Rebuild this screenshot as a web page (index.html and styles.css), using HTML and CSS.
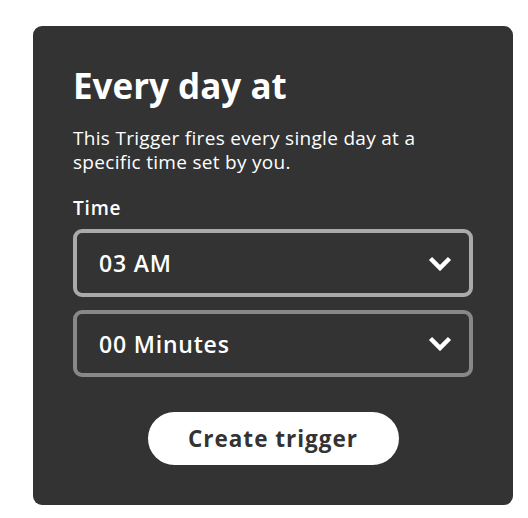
FILE: index.html
```html
<!DOCTYPE html>
<html>
<head>
<meta charset="utf-8">
<link rel="stylesheet" href="styles.css">
</head>
<body>
<div class="card">
  <h1 class="title">Every day at</h1>
  <p class="desc">This Trigger fires every single day at a specific time set by you.</p>
  <div class="label">Time</div>
  <div class="select select-focus">
    <span class="value">03 AM</span>
    <svg class="chev" width="24" height="15" viewBox="0 0 24 15"><polyline points="2.5,2.5 12,12 21.5,2.5" fill="none" stroke="#fff" stroke-width="4.5"/></svg>
  </div>
  <div class="select">
    <span class="value">00 Minutes</span>
    <svg class="chev" width="24" height="15" viewBox="0 0 24 15"><polyline points="2.5,2.5 12,12 21.5,2.5" fill="none" stroke="#fff" stroke-width="4.5"/></svg>
  </div>
  <div class="actions">
    <button class="btn">Create trigger</button>
  </div>
</div>
</body>
</html>
```
FILE: styles.css
```css
html, body { margin: 0; padding: 0; background: #fff; }
body {
  padding: 26px 15px 13px 33px;
  font-family: "Open Sans", "Noto Sans", sans-serif;
}
.card {
  width: 480px;
  height: 479px;
  box-sizing: border-box;
  background: #333;
  border-radius: 9px;
  padding: 40px 40px 0 40px;
  color: #fff;
}
.title {
  margin: 0;
  font-size: 35px;
  line-height: 40px;
  font-weight: 700;
}
.desc {
  margin: 20px 0 0 0;
  font-size: 19px;
  line-height: 24px;
  font-weight: 400;
  letter-spacing: 0.3px;
  width: 360px;
}
.label {
  margin-top: 22px;
  font-size: 19px;
  line-height: 24px;
  font-weight: 600;
  letter-spacing: 0.8px;
}
.select {
  margin-top: 13px;
  height: 67px;
  box-sizing: border-box;
  border: 4px solid #888;
  border-radius: 9px;
  display: flex;
  align-items: center;
  justify-content: space-between;
  padding: 0 17px 0 22px;
}
.select-focus { border-color: #aaa; margin-top: 9px; height: 68px; }
.value {
  font-size: 23px;
  font-weight: 600;
  letter-spacing: 0.8px;
}
.chev { display: block; }
.actions {
  display: flex;
  justify-content: center;
  margin-top: 35px;
}
.btn {
  width: 251px;
  height: 53px;
  border: none;
  border-radius: 27px;
  background: #fff;
  color: #333;
  font-family: "Open Sans", "Noto Sans", sans-serif;
  font-size: 22.5px;
  font-weight: 700;
  letter-spacing: 1px;
  padding: 0;
}
```
